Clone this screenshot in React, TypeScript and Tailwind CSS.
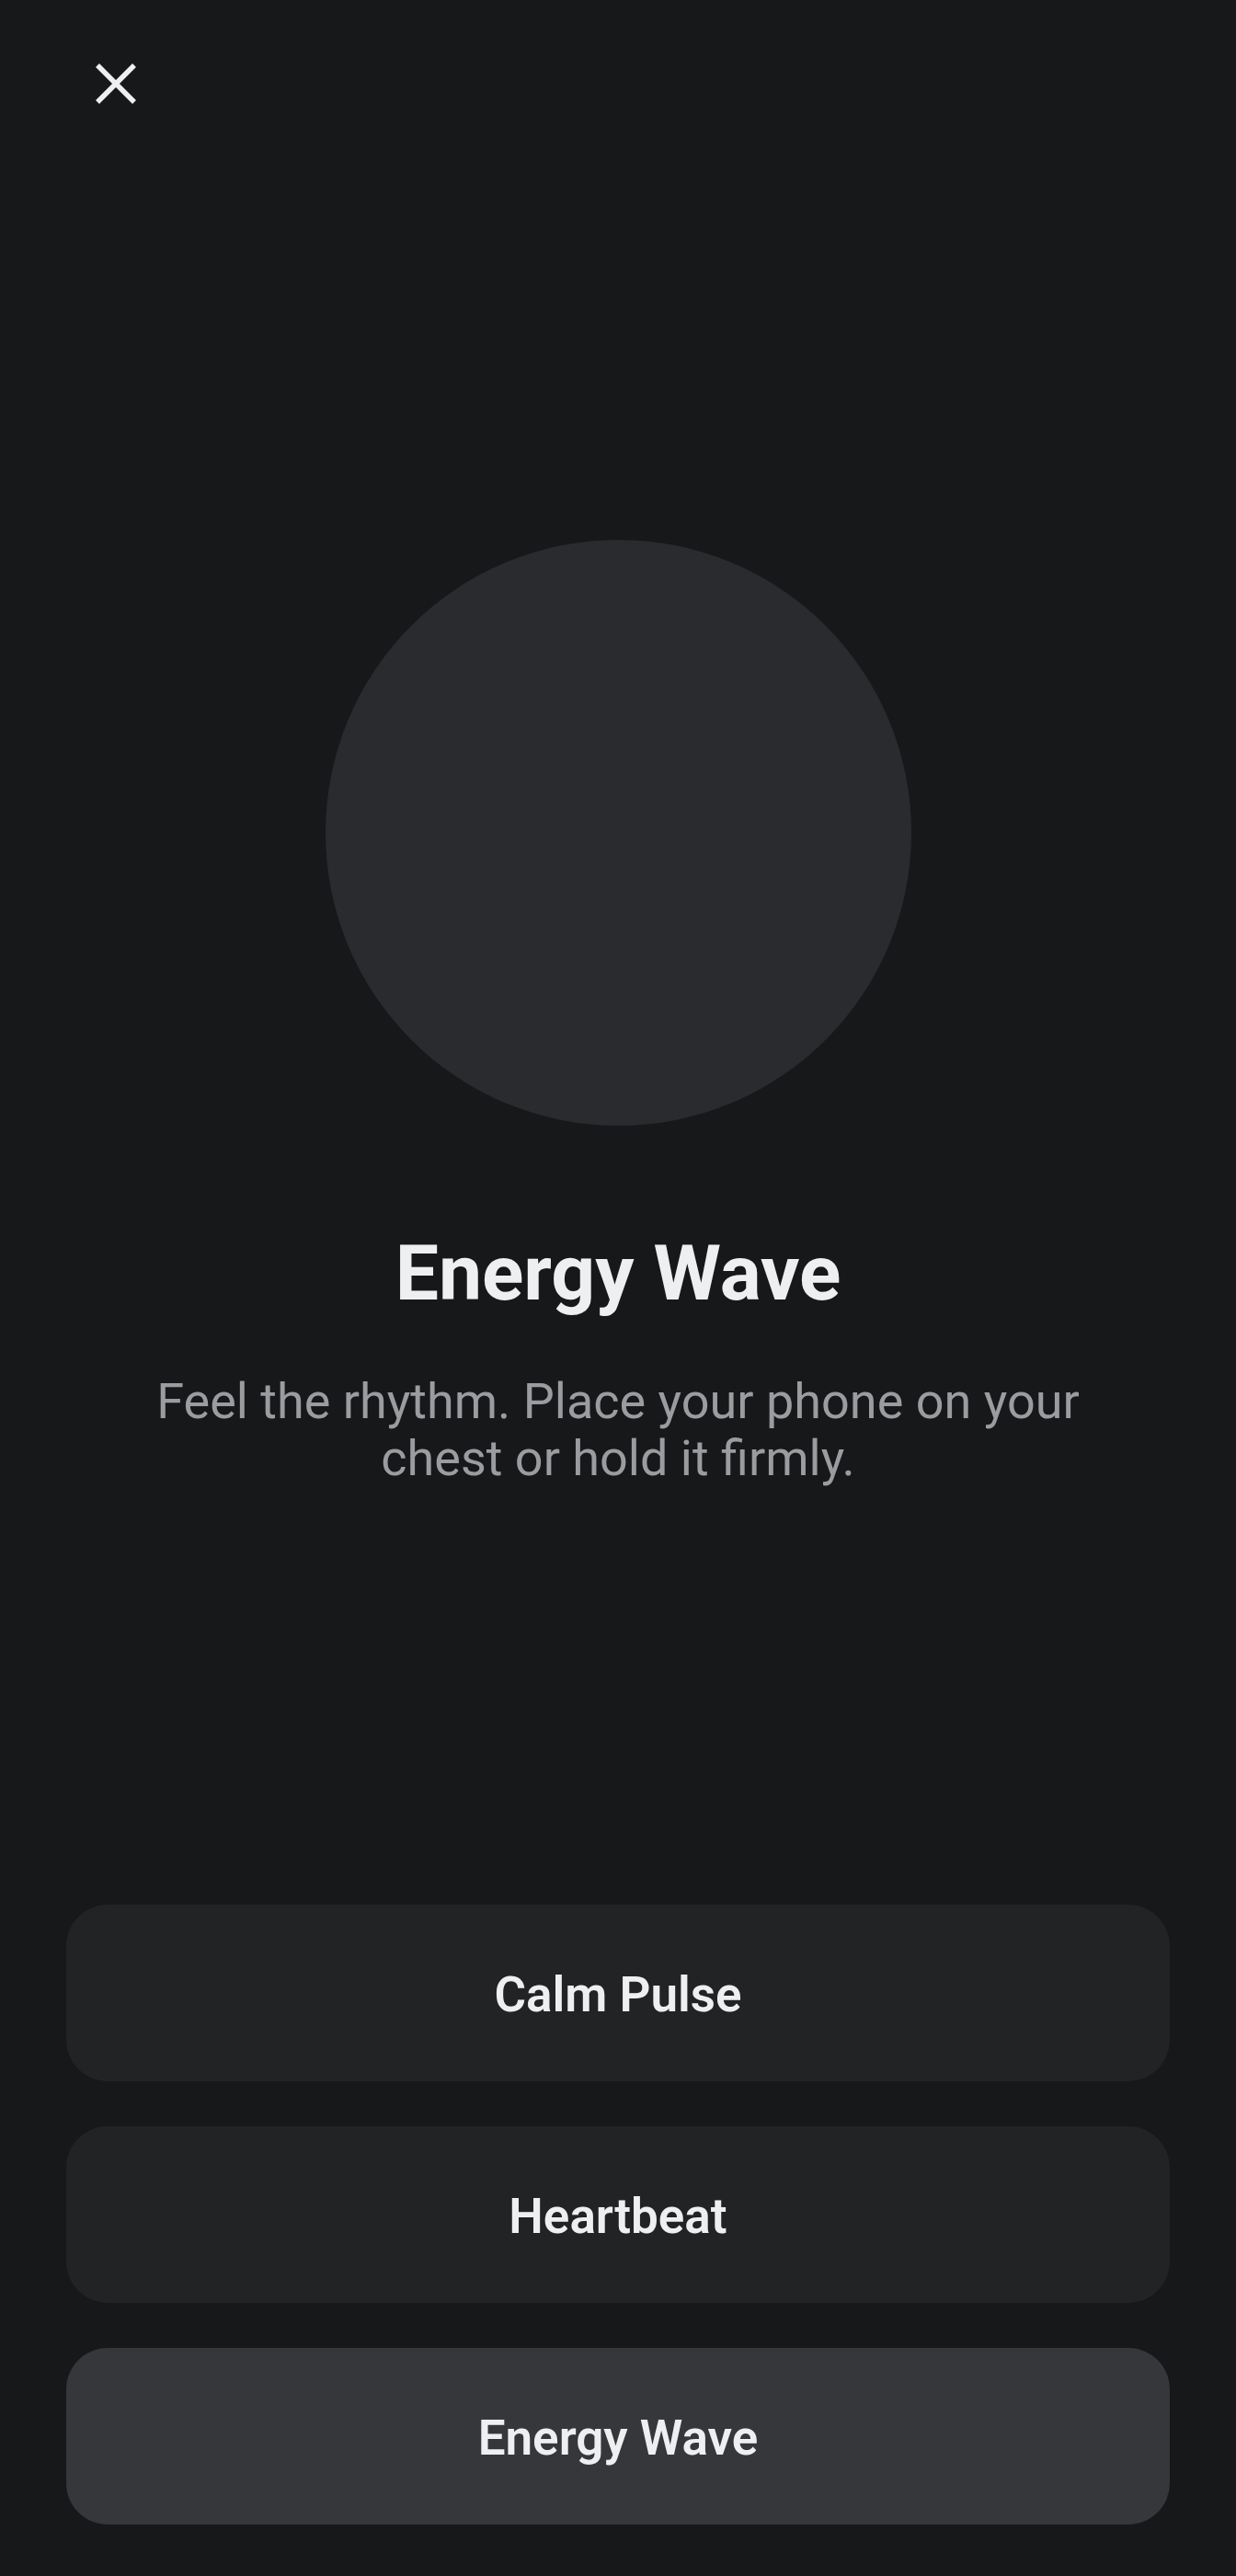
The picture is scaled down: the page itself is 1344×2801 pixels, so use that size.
const modes = [
  { id: "calm", label: "Calm Pulse" },
  { id: "heart", label: "Heartbeat" },
  { id: "energy", label: "Energy Wave" },
];

function CloseIcon() {
  return (
    <svg width="42" height="42" viewBox="0 0 42 42" className="overflow-visible">
      <line x1="1" y1="1" x2="41" y2="41" stroke="#eeeff1" strokeWidth="5.5" />
      <line x1="41" y1="1" x2="1" y2="41" stroke="#eeeff1" strokeWidth="5.5" />
    </svg>
  );
}

export default function App() {
  const active = "energy";

  return (
    <div className="h-[2801px] w-full bg-[#17181a] flex flex-col font-['Roboto',sans-serif]">
      <div className="pt-[70px] pl-[105px]">
        <button type="button" className="block">
          <CloseIcon />
        </button>
      </div>

      <div className="flex flex-col items-center">
        <div className="mt-[475px] w-[637px] h-[637px] rounded-full bg-[#2a2b2e]" />
        <h1 className="mt-[119px] text-[84px] leading-[84px] font-bold text-[#eeeff1]">
          Energy Wave
        </h1>
        <p className="mt-[66px] max-w-[1100px] text-center text-[54px] leading-[62px] text-[#9b9ca0]">
          Feel the rhythm. Place your phone on your chest or hold it firmly.
        </p>
      </div>

      <div className="flex-1" />

      <div className="flex flex-col gap-[49px] px-[72px] pb-[56px]">
        {modes.map((m) => (
          <button
            key={m.id}
            type="button"
            className={
              "h-[192px] w-full rounded-[45px] flex items-center justify-center pt-[6px] text-[53px] font-semibold text-[#eeeff1] " +
              (m.id === active ? "bg-[#36373a]" : "bg-[#222325]")
            }
          >
            {m.label}
          </button>
        ))}
      </div>
    </div>
  );
}
